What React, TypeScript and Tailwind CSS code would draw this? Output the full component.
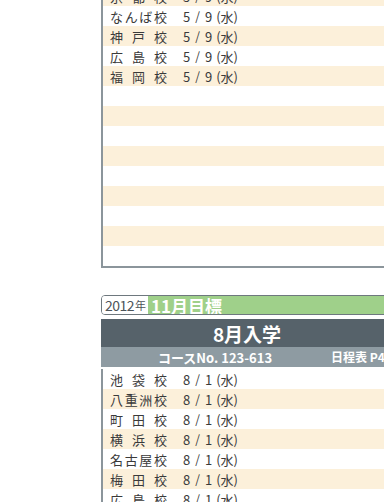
import React from 'react';

// ─── Data ─────────────────────────────────────────────────────────────────────

type Row = { name: string[]; date: string[] } | null;

const MAY: Row[] = [
  { name: ['京', '都', '校'], date: ['5', '9'] },
  { name: ['な', 'ん', 'ば', '校'], date: ['5', '9'] },
  { name: ['神', '戸', '校'], date: ['5', '9'] },
  { name: ['広', '島', '校'], date: ['5', '9'] },
  { name: ['福', '岡', '校'], date: ['5', '9'] },
  null, null, null, null, null, null, null, null, null,
];

const AUG: Row[] = [
  { name: ['池', '袋', '校'], date: ['8', '1'] },
  { name: ['八', '重', '洲', '校'], date: ['8', '1'] },
  { name: ['町', '田', '校'], date: ['8', '1'] },
  { name: ['横', '浜', '校'], date: ['8', '1'] },
  { name: ['名', '古', '屋', '校'], date: ['8', '1'] },
  { name: ['梅', '田', '校'], date: ['8', '1'] },
  { name: ['広', '島', '校'], date: ['8', '1'] },
];

const FONT = "font-['Noto_Sans_CJK_JP','Noto_Sans',sans-serif]";

// ─── Row ──────────────────────────────────────────────────────────────────────

const ScheduleRow: React.FC<{ row: Row; cream: boolean }> = ({ row, cream }) => (
  <div className={`h-[20px] flex items-center pl-[7px] ${cream ? 'bg-[#fcf0da]' : 'bg-white'}`}>
    {row && (
      <>
        <span className="w-[57px] flex justify-between text-[13px] leading-none text-[#3a3a3a]">
          {row.name.map((c, i) => <span key={i}>{c}</span>)}
        </span>
        <span className="ml-[16px] flex items-center text-[13px] leading-none text-[#3a3a3a]">
          <span>{row.date[0]}</span>
          <span className="mx-[5px] text-[12px]">/</span>
          <span>{row.date[1]}</span>
          <span className="ml-[4px]">(水)</span>
        </span>
      </>
    )}
  </div>
);

// ─── App ──────────────────────────────────────────────────────────────────────

export default function App() {
  return (
    <div className={`w-[384px] h-[502px] overflow-hidden bg-white ${FONT}`}>
      {/* May table (continued) */}
      <div className="ml-[101px] w-[292px] -mt-[14px] border-l-2 border-b-2 border-[#8b959b]">
        {MAY.map((r, i) => <ScheduleRow key={i} row={r} cream={i % 2 === 0} />)}
      </div>

      {/* Month target label */}
      <div className="ml-[101px] mt-[27px] w-[300px] h-[20px] flex border border-[#6e787e] rounded-l-[4px] overflow-hidden">
        <div className="w-[46px] bg-white flex items-center pl-[3px] text-[#4d555a]">
          <span className="text-[14px] leading-none tracking-[-0.5px]">2012</span>
          <span className="text-[11px] leading-none ml-[1px]">年</span>
        </div>
        <div className="flex-1 bg-[#9fd08a] flex items-center pl-[3px]">
          <span className="text-[17px] font-bold leading-none text-white">11月目標</span>
        </div>
      </div>

      {/* August table */}
      <div className="ml-[101px] mt-[4px] w-[292px]">
        <div className="h-[28px] bg-[#56626a] flex items-center justify-center">
          <span className="text-[19px] font-bold leading-none text-white">8月入学</span>
        </div>
        <div className="h-[20px] bg-[#8e9ba2] flex items-center text-white font-bold">
          <span className="ml-[57px] text-[13px] leading-none">コースNo. 123-613</span>
          <span className="ml-auto mr-[1px] text-[12px] leading-none">日程表 P48</span>
        </div>
        <div className="mt-[2px] border-l-2 border-[#8b959b]">
          {AUG.map((r, i) => <ScheduleRow key={i} row={r} cream={i % 2 === 1} />)}
        </div>
      </div>
    </div>
  );
}
